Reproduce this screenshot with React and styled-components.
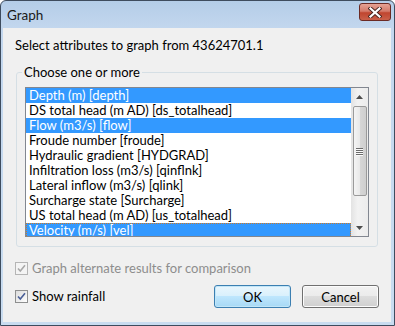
import React from 'react';
import styled, { createGlobalStyle, css } from 'styled-components';

const GlobalStyle = createGlobalStyle`
  html, body {
    margin: 0;
    padding: 0;
    background: #ffffff;
  }
  body {
    font-family: Lato, "Noto Sans", sans-serif;
    font-size: 13px;
  }
`;

const Window = styled.div`
  width: 395px;
  height: 326px;
  box-sizing: border-box;
  border: 1px solid #3e4c5e;
  border-radius: 6px 6px 0 0;
  background: linear-gradient(to bottom, #b4cde8 0px, #c3d7ee 28px, #c9dcf0 100%);
  display: flex;
  flex-direction: column;
  overflow: hidden;
`;

const TitleBar = styled.div`
  height: 27px;
  display: flex;
  align-items: center;
  justify-content: space-between;
  padding: 0 3px 0 6px;
  color: #1a1a1a;
  font-size: 13.5px;
`;

const CloseButton = styled.div`
  width: 30px;
  height: 16px;
  margin-top: -5px;
  border: 1px solid #6b2a24;
  border-radius: 3px;
  background: linear-gradient(to bottom, #e6a294 0%, #d47a6a 45%, #c0452f 55%, #c9604a 100%);
  display: flex;
  align-items: center;
  justify-content: center;
`;

const Client = styled.div`
  flex: 1;
  margin: 0 3px 3px 2px;
  background: #f0f0f0;
  display: flex;
  flex-direction: column;
  padding: 10px 12px 0 12px;
  color: #000;
`;

const Prompt = styled.div`
  line-height: 15px;
  margin-bottom: 12px;
`;

const Group = styled.fieldset`
  margin: 0 1px 0 1px;
  padding: 7px 8px 9px 5px;
  border: 1px solid #d5dfe5;
  border-radius: 3px;
  min-width: 0;
`;

const Legend = styled.legend`
  padding: 0 2px;
  line-height: 15px;
  margin-left: 0;
`;

const ListBox = styled.div`
  margin-left: 3px;
  height: 150px;
  box-sizing: border-box;
  border: 1px solid #828790;
  background: #fff;
  display: flex;
`;

const Items = styled.div`
  flex: 1;
  overflow: hidden;
`;

const Item = styled.div`
  height: 15px;
  line-height: 15px;
  padding-left: 3px;
  box-sizing: border-box;
  white-space: nowrap;
  ${p => p.selected && css`
    background: #3399ff;
    color: #fff;
  `}
  ${p => p.focused && css`
    border: 1px dotted #d07a26;
    padding-left: 2px;
    line-height: 13px;
  `}
`;

const ScrollBar = styled.div`
  width: 17px;
  background: linear-gradient(to right, #e3e3e3, #f2f2f2 40%, #ececec);
  display: flex;
  flex-direction: column;
  align-items: center;
`;

const Arrow = styled.div`
  width: 17px;
  height: 17px;
  display: flex;
  align-items: center;
  justify-content: center;
`;

const Track = styled.div`
  flex: 1;
  width: 100%;
  display: flex;
  flex-direction: column;
  align-items: center;
`;

const Thumb = styled.div`
  width: 14px;
  height: 90px;
  margin-top: 1px;
  box-sizing: border-box;
  border: 1px solid #9a9a9a;
  border-radius: 2px;
  background: linear-gradient(to right, #f4f4f4 0%, #e8e8e8 50%, #d6d6d6 51%, #cfcfcf 100%);
  display: flex;
  flex-direction: column;
  align-items: center;
  justify-content: center;
  gap: 1px;
`;

const Grip = styled.div`
  width: 7px;
  height: 1px;
  background: #6b6b6b;
  box-shadow: 0 1px 0 #fafafa;
`;

const CheckRow = styled.label`
  display: flex;
  align-items: center;
  gap: 4px;
  line-height: 15px;
  color: ${p => (p.disabled ? '#8d8d8d' : '#000')};
`;

const Box = styled.span`
  width: 13px;
  height: 13px;
  box-sizing: border-box;
  border: 1px solid ${p => (p.disabled ? '#b5b5b5' : '#8e8f8f')};
  background: ${p => (p.disabled
    ? '#f4f4f4'
    : 'linear-gradient(135deg, #dcdcdc 0%, #f0f0f0 60%, #ffffff 100%)')};
  display: flex;
  align-items: center;
  justify-content: center;
`;

const Options = styled.div`
  display: flex;
  flex-direction: column;
  margin-top: 14px;
`;

const BottomRow = styled.div`
  display: flex;
  align-items: center;
  margin-top: 9px;
`;

const Spacer = styled.div`
  flex: 1;
`;

const Button = styled.button`
  width: 77px;
  height: 23px;
  margin-left: ${p => (p.first ? '0' : '11px')};
  padding: 0;
  font-family: inherit;
  font-size: 13px;
  color: #000;
  border-radius: 3px;
  box-sizing: border-box;
  ${p => (p.primary
    ? css`
      border: 1px solid #3c7fb1;
      background: linear-gradient(to bottom, #e9f6fd 0%, #d9f0fc 49%, #bee6fd 50%, #a7d9f5 100%);
      box-shadow: inset 0 0 0 1px #c2e6f8;
    `
    : css`
      border: 1px solid #707070;
      background: linear-gradient(to bottom, #f2f2f2 0%, #ebebeb 49%, #dddddd 50%, #cfcfcf 100%);
      box-shadow: inset 0 0 0 1px #fcfcfc;
    `)}
`;

const attributes = [
  { label: 'Depth (m) [depth]', selected: true },
  { label: 'DS total head (m AD) [ds_totalhead]' },
  { label: 'Flow (m3/s) [flow]', selected: true },
  { label: 'Froude number [froude]' },
  { label: 'Hydraulic gradient [HYDGRAD]' },
  { label: 'Infiltration loss (m3/s) [qinflnk]' },
  { label: 'Lateral inflow (m3/s) [qlink]' },
  { label: 'Surcharge state [Surcharge]' },
  { label: 'US total head (m AD) [us_totalhead]' },
  { label: 'Velocity (m/s) [vel]', selected: true, focused: true },
];

const Check = ({ color }) => (
  <svg width="9" height="9" viewBox="0 0 9 9">
    <path d="M1 4.5 L3.3 7 L8 1.3" fill="none" stroke={color} strokeWidth="1.6" />
  </svg>
);

export default function App() {
  return (
    <>
      <GlobalStyle />
      <Window>
        <TitleBar>
          <span>Graph</span>
          <CloseButton>
            <svg width="14" height="11" viewBox="0 0 14 11">
              <path d="M2.5 1.5 L11.5 9.5 M11.5 1.5 L2.5 9.5" stroke="#4a2520" strokeWidth="4" strokeLinecap="square" />
              <path d="M2.5 1.5 L11.5 9.5 M11.5 1.5 L2.5 9.5" stroke="#ffffff" strokeWidth="2.2" strokeLinecap="square" />
            </svg>
          </CloseButton>
        </TitleBar>
        <Client>
          <Prompt>Select attributes to graph from 43624701.1</Prompt>
          <Group>
            <Legend>Choose one or more</Legend>
            <ListBox>
              <Items>
                {attributes.map(a => (
                  <Item key={a.label} selected={a.selected} focused={a.focused}>{a.label}</Item>
                ))}
              </Items>
              <ScrollBar>
                <Arrow>
                  <svg width="7" height="4" viewBox="0 0 7 4"><path d="M0 4 L3.5 0 L7 4 Z" fill="#4d4d4d" /></svg>
                </Arrow>
                <Track>
                  <Thumb>
                    <Grip />
                    <Grip />
                    <Grip />
                    <Grip />
                  </Thumb>
                </Track>
                <Arrow>
                  <svg width="7" height="4" viewBox="0 0 7 4"><path d="M0 0 L7 0 L3.5 4 Z" fill="#4d4d4d" /></svg>
                </Arrow>
              </ScrollBar>
            </ListBox>
          </Group>
          <Options>
            <CheckRow disabled>
              <Box disabled><Check color="#a8a8a8" /></Box>
              Graph alternate results for comparison
            </CheckRow>
            <BottomRow>
              <CheckRow>
                <Box><Check color="#4a5f97" /></Box>
                Show rainfall
              </CheckRow>
              <Spacer />
              <Button primary first>OK</Button>
              <Button>Cancel</Button>
            </BottomRow>
          </Options>
        </Client>
      </Window>
    </>
  );
}
